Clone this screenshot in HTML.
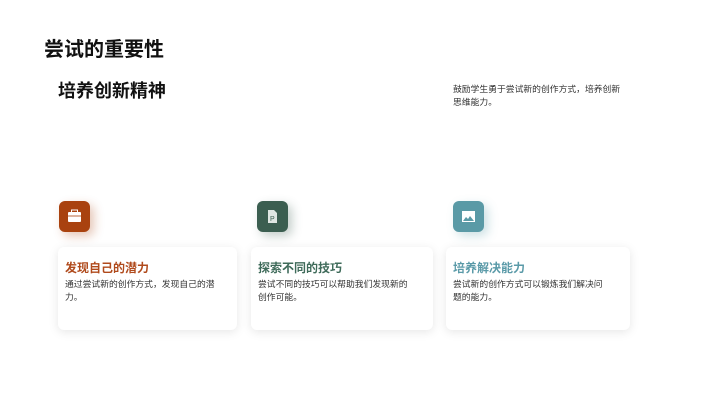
<html><head><style>
body{margin:0;width:720px;height:404px;background:#fff;font-family:"Liberation Sans","Noto Sans CJK SC",sans-serif;position:relative;overflow:hidden}
.a{position:absolute}
.ic{position:absolute;width:31px;height:31px;border-radius:6px;top:201px}
.card{position:absolute;top:247px;height:83px;background:#fff;border-radius:6px;box-shadow:0 2px 10px rgba(0,0,0,0.1)}
.card h3{margin:0;position:absolute;left:7px;top:12px;font-size:12px;font-weight:bold}
.card p{margin:0;position:absolute;left:7px;top:31px;font-size:8.8px;line-height:13px;color:#333;width:155px}
</style></head><body>
<div class="a" style="left:44px;top:33px;font-size:20px;font-weight:bold;color:#111">尝试的重要性</div>
<div class="a" style="left:58px;top:77px;font-size:18px;font-weight:bold;color:#111">培养创新精神</div>
<div class="a" style="left:453px;top:83px;font-size:8.8px;line-height:13px;color:#333;width:170px">鼓励学生勇于尝试新的创作方式，培养创新思维能力。</div>

<div class="ic" style="left:59px;background:#a9420f;box-shadow:4px 4px 10px rgba(169,66,15,0.3)"><svg width="31" height="31"><rect x="9" y="11" width="13" height="10" rx="1" fill="#fff"/><rect x="12.5" y="9" width="6" height="3" fill="none" stroke="#fff" stroke-width="1"/><line x1="9" y1="15" x2="22" y2="15" stroke="#a9420f" stroke-width="0.8"/></svg></div>
<div class="ic" style="left:257px;background:#3b5e50;box-shadow:4px 4px 10px rgba(59,94,80,0.3)"><svg width="31" height="31"><path d="M11 9h6l3 3v10h-9z" fill="#dfe6e2"/><text x="13" y="20" font-size="7" fill="#3b5e50" font-family="Liberation Sans">P</text></svg></div>
<div class="ic" style="left:453px;background:#5a9aa6;box-shadow:4px 4px 10px rgba(90,154,166,0.3)"><svg width="31" height="31"><rect x="9" y="10" width="13" height="11" fill="#fff"/><path d="M10 20l3-4 2 2 2-3 4 5z" fill="#5a9aa6"/></svg></div>

<div class="card" style="left:58px;width:179px"><h3 style="color:#b04a1c">发现自己的潜力</h3><p>通过尝试新的创作方式，发现自己的潜力。</p></div>
<div class="card" style="left:251px;width:182px"><h3 style="color:#3f6b5a">探索不同的技巧</h3><p>尝试不同的技巧可以帮助我们发现新的创作可能。</p></div>
<div class="card" style="left:446px;width:184px"><h3 style="color:#5a9aa8">培养解决能力</h3><p>尝试新的创作方式可以锻炼我们解决问题的能力。</p></div>
</body></html>
